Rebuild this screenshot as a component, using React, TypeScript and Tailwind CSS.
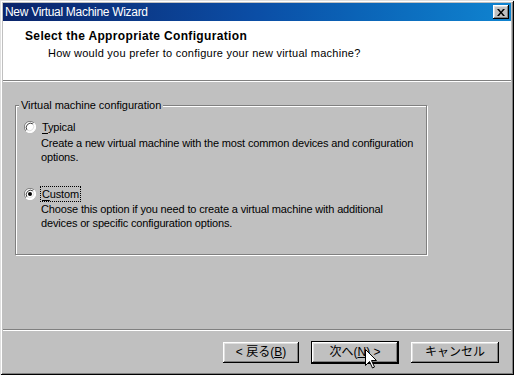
import { FC } from 'react'

// Win2000-style "New Virtual Machine Wizard" dialog

const Radio: FC<{ checked?: boolean }> = ({ checked }) => (
  <svg width="12" height="12" viewBox="0 0 12 12" className="shrink-0">
    <circle cx="6" cy="6" r="5.5" fill="#fff" />
    <path d="M10 2 A5.5 5.5 0 0 0 2 10" fill="none" stroke="#808080" strokeWidth="1" />
    <path d="M9 3 A4.3 4.3 0 0 0 3 9" fill="none" stroke="#404040" strokeWidth="1" />
    <path d="M2 10 A5.5 5.5 0 0 0 10 2" fill="none" stroke="#fff" strokeWidth="1" />
    <path d="M3 9 A4.3 4.3 0 0 0 9 3" fill="none" stroke="#dfdfdf" strokeWidth="1" />
    {checked && <circle cx="6" cy="6" r="2" fill="#000" />}
  </svg>
)

const Etched: FC = () => (
  <div className="h-[2px] border-t border-[#808080] border-b border-b-white" />
)

const btn =
  'h-[21px] flex items-center justify-center bg-[#c0c0c0] text-[12px] shadow-[inset_-1px_-1px_0_#000,inset_1px_1px_0_#fff,inset_-2px_-2px_0_#808080,inset_2px_2px_0_#dfdfdf]'

const App: FC = () => {
  return (
    <div className="relative w-[514px] h-[375px] p-[3px] flex flex-col bg-[#c0c0c0] text-black font-['Liberation_Sans','Noto_Sans_CJK_JP',sans-serif] text-[11px] leading-[14px] shadow-[inset_1px_1px_0_#dfdfdf,inset_-1px_-1px_0_#000,inset_2px_2px_0_#fff,inset_-2px_-2px_0_#808080]">
      {/* title bar */}
      <div className="h-[18px] flex items-center justify-between pl-[2px] pr-[2px] bg-gradient-to-r from-[#0a246a] via-[#0b4ea6] to-[#1084d0]">
        <span className="text-white text-[12px] leading-[14px] tracking-[-0.3px]">New Virtual Machine Wizard</span>
        <div className="w-[16px] h-[14px] flex items-center justify-center bg-[#c0c0c0] shadow-[inset_-1px_-1px_0_#000,inset_1px_1px_0_#fff,inset_-2px_-2px_0_#808080,inset_2px_2px_0_#dfdfdf]">
          <svg width="8" height="7" viewBox="0 0 8 7">
            <path d="M0 0h2l2 2.5L6 0h2L5 3.5 8 7H6L4 4.5 2 7H0l3-3.5z" fill="#000" />
          </svg>
        </div>
      </div>

      {/* header */}
      <div className="h-[59px] bg-white pl-[22px] pt-[8px]">
        <div className="font-bold text-[12px] leading-[14px] tracking-[0.35px]">Select the Appropriate Configuration</div>
        <div className="pl-[23px] pt-[3px] tracking-[0.25px]">How would you prefer to configure your new virtual machine?</div>
      </div>
      <Etched />

      {/* body */}
      <div className="flex-1 pl-[12px] pt-[17px]">
        <fieldset className="w-[412px] h-[156px] border border-[#808080] shadow-[inset_1px_1px_0_#fff,1px_1px_0_#fff] pl-[8px] pr-[8px] pt-[7px] tracking-[-0.15px]">
          <legend className="-ml-[5px] px-[2px] bg-[#c0c0c0] leading-[13px] tracking-[-0.05px]">Virtual machine configuration</legend>

          <div className="flex items-center gap-[4px]">
            <Radio />
            <span className="border border-transparent px-[1px]">
              <span className="underline underline-offset-2">T</span>ypical
            </span>
          </div>
          <div className="pl-[17px] pt-[1px]">
            Create a new virtual machine with the most common devices and configuration options.
          </div>

          <div className="flex items-center gap-[4px] mt-[22px]">
            <Radio checked />
            <span className="border border-dotted border-black px-[1px]">
              <span className="underline underline-offset-2">C</span>ustom
            </span>
          </div>
          <div className="pl-[17px]">
            Choose this option if you need to create a virtual machine with additional devices or specific configuration options.
          </div>
        </fieldset>
      </div>
      <Etched />

      {/* buttons */}
      <div className="h-[41px] flex items-center justify-end gap-[12px] pr-[12px] pt-[1px]">
        <button className={`${btn} w-[76px]`}>
          &lt; 戻る(<span className="underline">B</span>)
        </button>
        <div className="border border-black">
          <button className={`${btn} w-[86px] h-[19px]`}>
            次へ(<span className="underline">N</span>) &gt;
          </button>
        </div>
        <button className={`${btn} w-[88px]`}>キャンセル</button>
      </div>

      {/* mouse pointer */}
      <svg width="12" height="20" viewBox="0 0 12 20" className="absolute left-[365px] top-[349px]">
        <path d="M0.5 0.5V16.5L4.5 12.5L7.5 19L9.5 18L6.5 11.5H11.5Z" fill="#fff" stroke="#000" strokeWidth="1" />
      </svg>
    </div>
  )
}

export default App
